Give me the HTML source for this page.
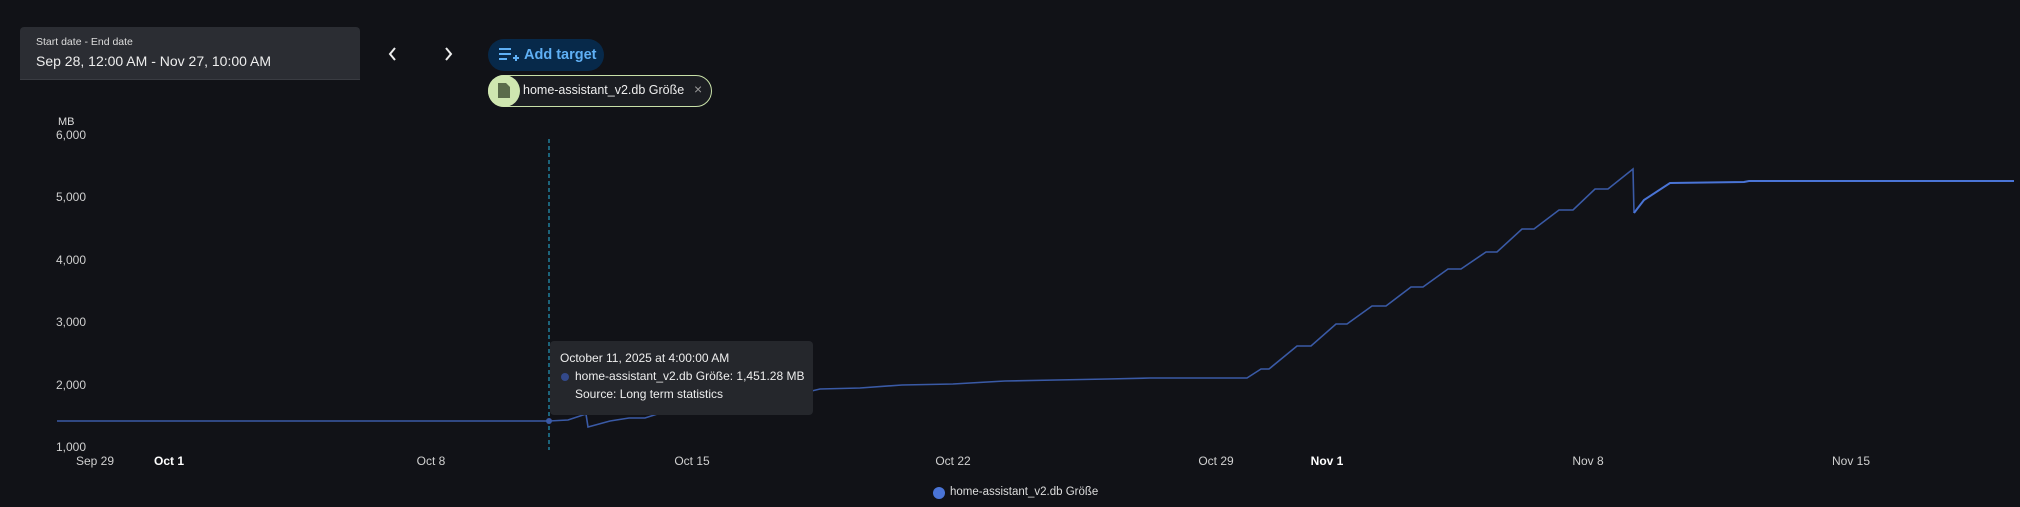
<!DOCTYPE html>
<html><head><meta charset="utf-8"><style>
body{margin:0;width:2020px;height:507px;background:#111217;overflow:hidden;font-family:"Liberation Sans",sans-serif;color:#e1e1e1;position:relative}
.abs{position:absolute}
.box{left:20px;top:27px;width:340px;height:52px;background:#2b2d33;border-radius:4px 4px 0 0;border-bottom:1px solid #3a3c42}
.ax{font-size:12px;color:#d0d0d0;text-align:right;width:64px;left:22px}
.xl{font-size:12px;color:#d0d0d0;top:454px;transform:translateX(-50%)}
</style></head><body>
<div class="abs box">
 <div class="abs" style="left:16px;top:9px;font-size:10.5px;color:#ddd">Start date - End date</div>
 <div class="abs" style="left:16px;top:26px;font-size:14px;color:#eee">Sep 28, 12:00 AM - Nov 27, 10:00 AM</div>
</div>
<svg class="abs" style="left:386px;top:46px" width="70" height="16"><path d="M9 2 L4 8 L9 14" stroke="#eee" stroke-width="2" fill="none"/><path d="M60 2 L65 8 L60 14" stroke="#eee" stroke-width="2" fill="none"/></svg>
<div class="abs" style="left:488px;top:39px;width:116px;height:32px;border-radius:16px;background:#07294a"></div>
<svg class="abs" style="left:498px;top:46px" width="22" height="18"><path d="M1 3H13M1 8H13M1 13H9M15 12H21M18 9V15" stroke="#5fb0f5" stroke-width="2" fill="none"/></svg>
<div class="abs" style="left:524px;top:47px;font-size:14.5px;color:#5fb0f5;font-weight:bold">Add target</div>
<div class="abs" style="left:488px;top:75px;width:222px;height:30px;border-radius:16px;border:1px solid #c8e0a8;background:#1b1d22"></div>
<div class="abs" style="left:488px;top:75px;width:32px;height:32px;border-radius:16px;background:#cfe6b0"></div>
<svg class="abs" style="left:497px;top:82px" width="14" height="17"><path d="M1 1H9L13 5V16H1Z" fill="#5b6b4b"/></svg>
<div class="abs" style="left:523px;top:83px;font-size:12.5px;color:#eee">home-assistant_v2.db Größe</div>
<div class="abs" style="left:694px;top:81px;font-size:14px;color:#999">×</div>
<div class="abs" style="left:58px;top:116px;font-size:11px;color:#ddd">MB</div>
<div class="abs ax" style="top:128px">6,000</div>
<div class="abs ax" style="top:190px">5,000</div>
<div class="abs ax" style="top:253px">4,000</div>
<div class="abs ax" style="top:315px">3,000</div>
<div class="abs ax" style="top:378px">2,000</div>
<div class="abs ax" style="top:440px">1,000</div>
<div class="abs xl" style="left:95px">Sep 29</div>
<div class="abs xl" style="left:169px;font-weight:bold;color:#fff">Oct 1</div>
<div class="abs xl" style="left:431px">Oct 8</div>
<div class="abs xl" style="left:692px">Oct 15</div>
<div class="abs xl" style="left:953px">Oct 22</div>
<div class="abs xl" style="left:1216px">Oct 29</div>
<div class="abs xl" style="left:1327px;font-weight:bold;color:#fff">Nov 1</div>
<div class="abs xl" style="left:1588px">Nov 8</div>
<div class="abs xl" style="left:1851px">Nov 15</div>
<svg class="abs" style="left:0;top:0" width="2020" height="507">
<line x1="549" y1="139" x2="549" y2="450" stroke="#27b4dc" stroke-width="1" stroke-dasharray="4,3"/>
<polyline fill="none" stroke="#3a5aa6" stroke-width="1.6" points="57,421 549,421 568,420 586,414 588,427 610,421 629,418 645,418 670,410 696,402 720,396 760,395 799,394 820,389 860,388 902,385 953,384 1005,381 1056,380 1108,379 1150,378 1247,378 1261,369 1269,369 1297,346 1311,346 1336,324 1347,324 1372,306 1386,306 1411,287 1423,287 1448,269 1461,269 1486,252 1497,252 1522,229 1534,229 1559,210 1573,210 1595,189 1608,189 1633,169 1634,213"/>
<polyline fill="none" stroke="#4a74d6" stroke-width="2" points="1634,213 1644,200 1670,183 1744,182 1749,181 2014,181"/>
<circle cx="549" cy="421" r="3" fill="#3a5aa6"/>
<circle cx="939" cy="493" r="6" fill="#4a74d6"/>
</svg>
<div class="abs" style="left:950px;top:486px;font-size:11.5px;color:#ddd">home-assistant_v2.db Größe</div>
<div class="abs" style="left:550px;top:341px;width:263px;height:74px;background:#25272c;border-radius:4px">
 <div class="abs" style="left:10px;top:10px;font-size:12px;color:#eee">October 11, 2025 at 4:00:00 AM</div>
 <div class="abs" style="left:11px;top:32px;width:8px;height:8px;border-radius:50%;background:#33498a"></div>
 <div class="abs" style="left:25px;top:28px;font-size:12px;color:#eee">home-assistant_v2.db Größe: 1,451.28 MB</div>
 <div class="abs" style="left:25px;top:46px;font-size:12px;color:#eee">Source: Long term statistics</div>
</div>
</body></html>
